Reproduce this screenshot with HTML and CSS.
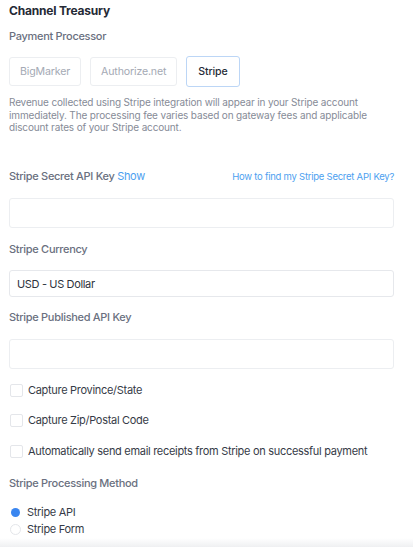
FILE: index.html
```html
<!DOCTYPE html>
<html>
<head>
<meta charset="utf-8">
<link rel="stylesheet" href="styles.css">
</head>
<body>
<div class="page">
  <h1 class="title">Channel Treasury</h1>
  <div class="label first">Payment Processor</div>
  <div class="tabs">
    <div class="tab">BigMarker</div>
    <div class="tab">Authorize.net</div>
    <div class="tab active">Stripe</div>
  </div>
  <p class="desc">Revenue collected using Stripe integration will appear in your Stripe account immediately. The processing fee varies based on gateway fees and applicable discount rates of your Stripe account.</p>

  <div class="label-row">
    <div class="label">Stripe Secret API Key <span class="link">Show</span></div>
    <div class="help link">How to find my Stripe Secret API Key?</div>
  </div>
  <div class="input"></div>

  <div class="label">Stripe Currency</div>
  <div class="input select">USD - US Dollar</div>

  <div class="label">Stripe Published API Key</div>
  <div class="input"></div>

  <div class="checks">
    <div class="check"><span class="box"></span>Capture Province/State</div>
    <div class="check"><span class="box"></span>Capture Zip/Postal Code</div>
    <div class="check"><span class="box"></span>Automatically send email receipts from Stripe on successful payment</div>
  </div>

  <div class="label">Stripe Processing Method</div>
  <div class="radios">
    <div class="radio"><span class="dot on"></span>Stripe API</div>
    <div class="radio"><span class="dot"></span>Stripe Form</div>
  </div>
</div>
<div class="fade"></div>
</body>
</html>
```
FILE: styles.css
```css
html, body {
  margin: 0;
  padding: 0;
  background: #ffffff;
  height: 547px;
  overflow: hidden;
}
body {
  font-family: Inter, "Noto Sans", sans-serif;
  color: #2f3440;
  position: relative;
}
.page {
  padding: 3px 19px 0 9px;
}
.title {
  margin: 0;
  font-size: 12px;
  font-weight: 700;
  letter-spacing: -0.2px;
  line-height: 15px;
  color: #252a35;
}
.label {
  font-size: 11px;
  font-weight: 500;
  letter-spacing: -0.3px;
  color: #6a7080;
  line-height: 15px;
  margin-top: 11px;
}
.tabs {
  display: flex;
  gap: 9px;
  margin-top: 13px;
}
.tab {
  height: 29px;
  box-sizing: border-box;
  border: 1px solid #eceef1;
  border-radius: 3px;
  padding: 0 10px;
  display: flex;
  align-items: center;
  font-size: 10.6px;
  letter-spacing: -0.15px;
  color: #a4a9b4;
}
.tab.active {
  height: 31px;
  margin-top: -1px;
  border-color: #bcd6f6;
  color: #262b36;
  font-weight: 500;
  padding: 0 11px;
}
.desc {
  margin: 9px 0 0;
  font-size: 10px;
  letter-spacing: -0.15px;
  line-height: 12.7px;
  color: #868b97;
}
.label-row {
  display: flex;
  justify-content: space-between;
  align-items: baseline;
  margin-top: 35px;
}
.label-row .label {
  margin-top: 0;
}
.link {
  color: #4d9ff0;
  font-weight: 400;
}
.help {
  font-size: 9.5px;
  letter-spacing: -0.25px;
}
.input {
  height: 30px;
  box-sizing: border-box;
  border: 1px solid #eceef1;
  border-radius: 3px;
  margin-top: 13.5px;
  margin-bottom: 14px;
}
.select {
  height: 27px;
  margin-bottom: 13px;
  display: flex;
  align-items: center;
  padding-left: 7px;
  font-size: 11px;
  letter-spacing: -0.35px;
  color: #2d323d;
  border-color: #e6e8ec;
}
.select + .label, .input + .label {
  margin-top: 0;
}
.checks {
  display: flex;
  flex-direction: column;
  gap: 15.5px;
}
.check {
  display: flex;
  align-items: center;
  gap: 5px;
  font-size: 11px;
  letter-spacing: -0.3px;
  color: #363b47;
  line-height: 15px;
}
.box {
  width: 11px;
  height: 11px;
  border: 1px solid #e4e6ea;
  border-radius: 2px;
  margin-left: 1px;
  flex: none;
}
.checks + .label {
  margin-top: 17px;
}
.radios {
  display: flex;
  flex-direction: column;
  gap: 2px;
  margin-top: 14px;
}
.radio {
  display: flex;
  align-items: center;
  gap: 6px;
  font-size: 11px;
  letter-spacing: -0.3px;
  color: #363b47;
  line-height: 15px;
}
.dot {
  width: 11px;
  height: 11px;
  box-sizing: border-box;
  border-radius: 50%;
  border: 1px solid #e4e6ea;
  margin-left: 1px;
  flex: none;
}
.dot.on {
  width: 9px;
  height: 9px;
  margin: 0 1px 0 2px;
  border: none;
  background: #3a86f0;
}
.fade {
  position: absolute;
  left: 0;
  right: 0;
  bottom: 0;
  height: 9px;
  background: linear-gradient(#ffffff, #eff0f2);
}
```
